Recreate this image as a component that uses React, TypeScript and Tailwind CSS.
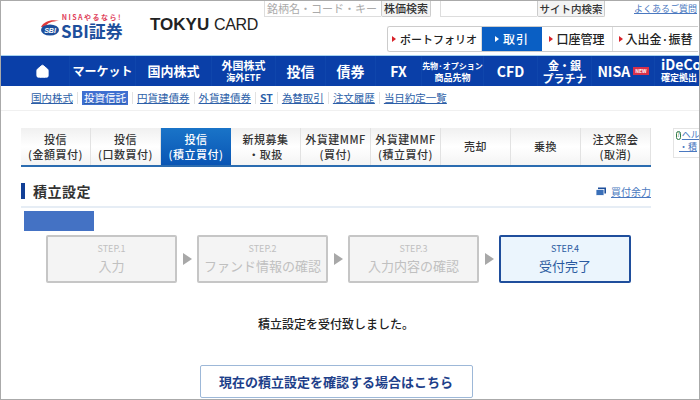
import { Home } from "lucide-react";

const FONT = "font-['Noto_Sans_CJK_JP','Noto_Sans','Liberation_Sans',sans-serif]";

const navItems = [
  { w: "w-[69px]", label: "" },
  { w: "w-[66px]", label: "マーケット", size: "text-[12px]" },
  { w: "w-[76px]", label: "国内株式", size: "text-[13px]" },
  { w: "w-[64px]", label: "外国株式", sub: "海外ETF" },
  { w: "w-[50px]", label: "投信", size: "text-[14px]" },
  { w: "w-[50px]", label: "債券", size: "text-[14px]" },
  { w: "w-[46px]", label: "FX", size: "text-[14px]" },
  { w: "w-[62px]", small: "先物·オプション", sub: "商品先物" },
  { w: "w-[54px]", label: "CFD", size: "text-[14px]" },
  { w: "w-[54px]", label: "金・銀", sub: "プラチナ", tight: true },
];

const subItems = ["国内株式", "投資信託", "円貨建債券", "外貨建債券", "ST", "為替取引", "注文履歴", "当日約定一覧"];

const tabs = [
  ["投信", "(金額買付)"],
  ["投信", "(口数買付)"],
  ["投信", "(積立買付)"],
  ["新規募集", "・取扱"],
  ["外貨建MMF", "(買付)"],
  ["外貨建MMF", "(積立買付)"],
  ["売却"],
  ["乗換"],
  ["注文照会", "(取消)"],
];

const steps = [
  ["STEP.1", "入力"],
  ["STEP.2", "ファンド情報の確認"],
  ["STEP.3", "入力内容の確認"],
  ["STEP.4", "受付完了"],
];

function SbiLogo() {
  return (
    <div className="flex items-end gap-[1px]">
      <svg width="20" height="22" viewBox="0 0 20 22" className="mb-[1px]">
        <path d="M1 9 C4 3 12 1 19 3 C12 3 7 5 5 9 Z" fill="#e03a3a" />
        <ellipse cx="10" cy="12" rx="9" ry="5.5" fill="#1d4f9c" />
        <text x="10" y="14.5" textAnchor="middle" fontSize="7" fontWeight="700" fontStyle="italic" fill="#fff" fontFamily="Liberation Sans">
          SBI
        </text>
      </svg>
      <div className="flex flex-col items-center">
        <span className="text-[7px] leading-[8px] font-bold tracking-[1.5px] whitespace-nowrap text-[#e0405a]">NISAやるなら!</span>
        <span className="text-[17px] leading-[20px] font-bold whitespace-nowrap text-[#1d4f9c]">SBI証券</span>
      </div>
    </div>
  );
}

function Header() {
  return (
    <div className="flex h-[54px]">
      <div className="mt-[12px] ml-[39px] w-[110px]">
        <SbiLogo />
      </div>
      <div className="mt-[12px] w-[114px] font-['Liberation_Sans'] text-[17px] leading-[24px] whitespace-nowrap text-[#222]">
        <span className="font-bold">TOKYU</span> <span className="text-[16px] tracking-[-0.3px]">CARD</span>
      </div>
      <div className="flex-1">
        <div className="flex h-[16px] items-start leading-[15px] text-[#333]">
          <div className="h-[16px] w-[117px] overflow-hidden border-b border-l border-[#ddd] pl-[2px] text-[11px] whitespace-nowrap text-[#aaa]">
            銘柄名・コード・キー
          </div>
          <div className="h-[16px] w-[50px] rounded-b-[2px] border border-t-0 border-[#ccc] bg-[#f4f4f4] text-center text-[11px] font-medium whitespace-nowrap">株価検索</div>
          <div className="ml-[9px] h-[16px] w-[97px] border-b border-l border-[#ddd]" />
          <div className="h-[16px] w-[68px] rounded-b-[2px] border border-t-0 border-[#ccc] bg-[#f4f4f4] text-center text-[10.5px] font-medium whitespace-nowrap">サイト内検索</div>
          <div className="ml-[29px] text-[9px] whitespace-nowrap text-[#4a78c0] underline">よくあるご質問</div>
        </div>
        <div className="mt-[9px] ml-[123px] flex h-[26px] w-[311px] overflow-hidden rounded-l-[3px] border border-r-0 border-[#ccc] text-[12px] leading-[24px] font-medium text-[#222]">
          <div className="flex w-[94px] items-center justify-center gap-[4px] border-r border-[#ddd] bg-white text-[11px] whitespace-nowrap">
            <span className="h-0 w-0 border-y-[3px] border-l-[4px] border-y-transparent border-l-[#d8232a]" />
            ポートフォリオ
          </div>
          <div className="flex w-[60px] items-center justify-center gap-[4px] bg-[#0a5fc4] tracking-[1px] text-white">
            <span className="h-0 w-0 border-y-[3px] border-l-[4px] border-y-transparent border-l-white" />
            取引
          </div>
          <div className="flex w-[71px] items-center justify-center gap-[3px] border-r border-[#ddd] bg-white">
            <span className="h-0 w-0 border-y-[3px] border-l-[4px] border-y-transparent border-l-[#d8232a]" />
            口座管理
          </div>
          <div className="flex flex-1 items-center justify-center gap-[3px] bg-white whitespace-nowrap">
            <span className="h-0 w-0 border-y-[3px] border-l-[4px] border-y-transparent border-l-[#d8232a]" />
            入出金·振替
          </div>
        </div>
      </div>
    </div>
  );
}

function MainNav() {
  return (
    <div className="flex h-[31px] border-t border-[#a8d4f0] bg-[#0a3fa8] text-white">
      {navItems.map((item, i) => (
        <div key={i} className={`${item.w} flex shrink-0 flex-col items-center justify-center border-r border-[#0f46ac] font-bold whitespace-nowrap`}>
          {i === 0 && <Home size={15} fill="white" strokeWidth={1.5} className="ml-[15px]" />}
          {item.label && !item.sub && <span className={`${item.size} leading-[28px]`}>{item.label}</span>}
          {item.label && item.sub && <span className="text-[11px] leading-[13px]">{item.label}</span>}
          {item.small && <span className="text-[8px] leading-[13px]">{item.small}</span>}
          {item.sub && <span className={`${item.tight ? "text-[11px]" : "text-[9px]"} leading-[12px]`}>{item.sub}</span>}
        </div>
      ))}
      <div className="flex w-[63px] shrink-0 items-center justify-center gap-[3px] border-r border-[#0f46ac] font-bold">
        <span className="text-[14px]">NISA</span>
        <span className="bg-[#d8304a] px-[2px] text-[5px] leading-[8px]">NEW</span>
      </div>
      <div className="flex min-w-0 flex-1 flex-col overflow-hidden pl-[6px] font-bold whitespace-nowrap">
        <span className="text-[14px] leading-[16px]">iDeCo</span>
        <span className="text-[9px] leading-[11px]">確定拠出</span>
      </div>
    </div>
  );
}

function SubNav() {
  return (
    <div className="flex h-[25px] items-center border-b border-[#f0f0f0] pl-[30px] text-[10.5px] text-[#2d5fa8] underline">
      {subItems.map((item, i) => (
        <div key={item} className="flex items-center whitespace-nowrap">
          <span className={i === 1 ? "bg-[#3f6fd0] px-[2px] leading-[14px] text-white" : item === "ST" ? "font-bold" : ""}>{item}</span>
          {i < subItems.length - 1 && <span className="mx-[4px] h-[12px] w-px bg-[#e2e2e2]" />}
        </div>
      ))}
    </div>
  );
}

function Tabs() {
  return (
    <div className="flex h-[39px] border-b-2 border-[#2b6cb0]">
      {tabs.map((t, i) => (
        <div
          key={i}
          className={`flex w-[70px] flex-col items-center justify-center text-[11px] leading-[15px] font-medium tracking-[0.5px] whitespace-nowrap ${
            i === 2
              ? "bg-gradient-to-b from-[#1a74c8] to-[#0a55b4] text-white"
              : "border-r border-[#e2e2e2] bg-gradient-to-b from-[#f0f0f0] via-white to-[#f4f4f4] text-[#333]"
          }`}
        >
          {t.map((line) => (
            <span key={line}>{line}</span>
          ))}
        </div>
      ))}
    </div>
  );
}

function Stepper() {
  return (
    <div className="ml-[25px] flex h-[48px] w-[586px] items-stretch">
      {steps.map(([step, label], i) => {
        const active = i === 3;
        return (
          <div key={step} className="flex items-center">
            {i > 0 && <span className="mr-[5px] ml-[6px] h-0 w-0 border-y-[6px] border-l-[9px] border-y-transparent border-l-[#a8a8a8]" />}
            <div
              className={`flex h-[48px] flex-col items-center justify-center rounded-[2px] border-2 ${active ? "w-[132px]" : "w-[131px]"} ${
                active ? "border-[#1f4e9c] bg-[#ebf5fd] text-[#2a5aa0]" : "border-[#c6c6c6] bg-[#f4f4f4] text-[#c0c0c0]"
              }`}
            >
              <span className="text-[9px] leading-[14px]">{step}</span>
              <span className="text-[13px] leading-[20px] whitespace-nowrap">{label}</span>
            </div>
          </div>
        );
      })}
    </div>
  );
}

export default function App() {
  return (
    <div className={`h-[400px] w-[700px] overflow-hidden border border-[#aaaaaa] bg-white ${FONT}`}>
      <Header />
      <MainNav />
      <SubNav />
      <div className="mt-[17px] flex">
        <main className="ml-[20px] w-[630px]">
          <Tabs />
          <div className="mt-[17px] flex h-[24px] items-center justify-between border-b-2 border-[#e6edf5] pb-[8px]">
            <div className="flex items-center gap-[8px]">
              <span className="h-[16px] w-[4px] bg-[#123f96]" />
              <h1 className="text-[14px] leading-[16px] font-bold tracking-[0.5px] text-[#333]">積立設定</h1>
            </div>
            <div className="flex items-center gap-[5px] text-[10px] text-[#4a78c0] underline">
              <svg width="10" height="9" viewBox="0 0 10 9">
                <rect x="2" y="0.5" width="8" height="6" fill="#1d4f9c" />
                <rect x="0" y="2.5" width="8" height="6" fill="#3a6fb8" stroke="#fff" strokeWidth="0.8" />
              </svg>
              買付余力
            </div>
          </div>
          <div className="mt-[3px] ml-[3px] h-[20px] w-[70px] bg-[#4472c4]" />
          <div className="mt-[4px]">
            <Stepper />
          </div>
          <p className="mt-[32px] text-center text-[12px] leading-[18px] font-medium text-[#222]">積立設定を受付致しました。</p>
          <div className="mt-[32px] flex justify-center">
            <button className="h-[33px] w-[273px] rounded-[2px] border border-[#9db8d8] bg-white text-[13px] font-bold text-[#1e3f8a]">
              現在の積立設定を確認する場合はこちら
            </button>
          </div>
        </main>
        <aside className="ml-[22px] h-[30px] flex-1 overflow-hidden border border-r-0 border-[#e4e4e4] pl-[2px] text-[9px] leading-[12px] whitespace-nowrap text-[#4a78c0]">
          <div className="flex items-center gap-[1px]">
            <span className="flex h-[9px] w-[9px] items-center justify-center rounded-full border border-[#2f7a4a] text-[6px] text-[#2f7a4a]">?</span>
            <span className="underline">ヘル</span>
          </div>
          <div className="pl-[3px] underline">・積</div>
        </aside>
      </div>
    </div>
  );
}
